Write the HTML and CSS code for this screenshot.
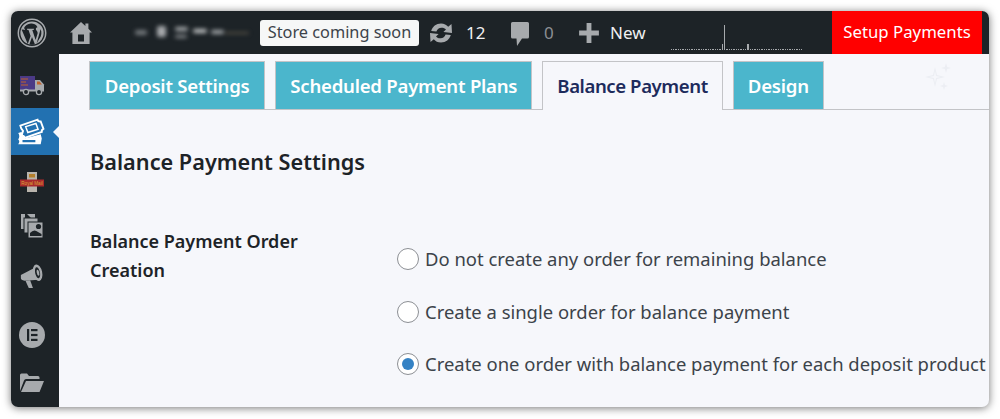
FILE: index.html
```html
<!DOCTYPE HTML>
<html>
<head>
  <meta charset="UTF-8">
  <title>Balance Payment Settings</title>
  <link rel="stylesheet" href="styles.css">
</head>
<body>
  <div class="window">
    <div class="topbar">
      <svg class="wp-logo" viewBox="0 0 30 30">
        <circle cx="15" cy="15" r="13.7" fill="none" stroke="#a7aaad" stroke-width="1.5"/>
        <circle cx="15" cy="15" r="11.6" fill="#a7aaad"/>
        <path d="M4.6 11.5 L10.8 26 L13.6 18 L11.5 12 L10 11.7 L10 10.7 L17 10.7 L17 11.7 L15.3 12 L18.6 22 L20.6 15.5 C21 13.6 19.4 12.6 19 11.7 C18.5 10.6 19.4 9.3 20.5 9.3 C19 6 16 5.5 14 5.6 C10.5 5.8 8 7.6 6.8 10.6 L8 10.7 L8 11.7 Z M23.6 11 C25 14 24.5 18 22.5 20.5 L19.6 25.5 Z M15 19 L18 26.4 C16 27 14 27 12.3 26.4 Z" fill="#1d2327"/>
      </svg>
      <svg class="home-icon" viewBox="0 0 22 24">
        <path d="M11 1 L15.4 5 L15.4 2.5 L18.4 2.5 L18.4 7.8 L22 11.4 L19.6 11.4 L19.6 23 L2.4 23 L2.4 11.4 L0 11.4 Z" fill="#a7aaad"/>
        <rect x="8" y="13.5" width="6" height="7" fill="#1d2327"/>
      </svg>
      <div class="blurred-name">
        <span class="blob b1"></span><span class="blob b2"></span><span class="blob b3"></span><span class="blob b4"></span><span class="blob b5"></span><span class="blob b6"></span><span class="blob b7"></span>
      </div>
      <div class="store-badge">Store coming soon</div>
      <svg class="updates-icon" viewBox="0 0 26 22">
        <path d="M13 1.5 C16.2 1.5 18.6 2.8 20.2 4.8 L23.5 2 L24 11 L15.4 10 L18 7.6 C16.8 6.2 15.2 5.6 13.4 5.7 C11 5.8 9.2 7.2 8.4 9.4 L3.2 9 C4.4 4.6 8.2 1.5 13 1.5 Z M13 20.5 C9.8 20.5 7.4 19.2 5.8 17.2 L2.5 20 L2 11 L10.6 12 L8 14.4 C9.2 15.8 10.8 16.4 12.6 16.3 C15 16.2 16.8 14.8 17.6 12.6 L22.8 13 C21.6 17.4 17.8 20.5 13 20.5 Z" fill="#a7aaad"/>
      </svg>
      <span class="bar-text count-updates">12</span>
      <svg class="comment-icon" viewBox="0 0 20 26">
        <path d="M2.5 1 L17.5 1 Q19 1 19 2.5 L19 16 Q19 17.5 17.5 17.5 L12 17.5 L7 25 L6.5 17.5 L2.5 17.5 Q1 17.5 1 16 L1 2.5 Q1 1 2.5 1 Z" fill="#a7aaad"/>
      </svg>
      <span class="bar-text count-comments">0</span>
      <svg class="plus-icon" viewBox="0 0 20 20">
        <path d="M7.8 1 L12.2 1 L12.2 7.8 L19 7.8 L19 12.2 L12.2 12.2 L12.2 19 L7.8 19 L7.8 12.2 L1 12.2 L1 7.8 L7.8 7.8 Z" fill="#a7aaad"/>
      </svg>
      <span class="bar-text count-new">New</span>
      <div class="sparkline" id="sparkline"></div>
      <div class="setup-btn">Setup Payments</div>
    </div>
    <div class="main">
      <div class="sidebar">
        <div class="menu-item">
          <svg class="menu-icon" viewBox="0 0 26 22">
            <rect x="1" y="2" width="15" height="14" fill="#4b3a86"/>
            <path d="M2 5 H9 M2 8 H7 M2 11 H9" stroke="#c2622c" stroke-width="1.2"/>
            <path d="M16 6 H21 L25 10.5 V16 H16 Z" fill="#a7aaad"/>
            <path d="M18 7.5 H20.5 L23 10.5 H18 Z" fill="#c2622c"/>
            <rect x="1" y="15.5" width="24" height="2" fill="#a7aaad"/>
            <circle cx="7" cy="18" r="2.6" fill="#1d2327" stroke="#a7aaad" stroke-width="1.3"/>
            <circle cx="20" cy="18" r="2.6" fill="#1d2327" stroke="#a7aaad" stroke-width="1.3"/>
          </svg>
        </div>
        <div class="menu-item active">
          <svg class="menu-icon" viewBox="0 0 28 26">
            <path d="M5 7 L21 1.5 Q21.5 3.6 24 3.2 L26.5 10 Q24.5 11 25 13 L9 18.5 Q8.5 16 6 16.5 L7.5 12 Q5.5 10 5 7 Z" fill="#2271b1" stroke="#fff" stroke-width="1.8"/>
            <path d="M10 8 L19.5 5 L21.5 10.5 L12 13.5 Z" fill="#2271b1" stroke="#fff" stroke-width="1.4"/>
            <path d="M3 14 L6 13 L9 19 L24 15 L25 19 L24 24.5 L3 24.5 Q5 21.5 3 20 Q5 17 3 14 Z" fill="#fff"/>
            <path d="M7 20.5 L19 20.5 L19 22.5 L7 22.5 Z" fill="#2271b1"/>
          </svg>
        </div>
        <div class="menu-item mail-item">
          <svg class="menu-icon" viewBox="0 0 26 22">
            <rect x="8" y="1" width="10" height="20" fill="#b9b4ac"/>
            <rect x="10" y="3" width="6" height="3.5" fill="#b5802c"/>
            <rect x="1" y="8.5" width="24" height="7" fill="#a92a2c"/>
            <text class="mail-text" x="13" y="14" text-anchor="middle">Royal Mail</text>
          </svg>
        </div>
        <div class="menu-item">
          <svg class="menu-icon" viewBox="0 0 24 26">
            <rect x="1" y="1" width="14" height="15" fill="#a7aaad"/>
            <path d="M5 1 L7 1 L11 5 L5 5 Z" fill="#1d2327"/>
            <rect x="4" y="5" width="14" height="15" fill="#a7aaad" stroke="#1d2327"/>
            <rect x="8" y="9" width="15" height="16" fill="#a7aaad" stroke="#1d2327"/>
            <path d="M10 23 L10 20 Q14 15.5 18 19 L21.5 21 V23 Z" fill="#1d2327"/>
            <circle cx="18.5" cy="13.5" r="2.6" fill="#1d2327"/>
          </svg>
        </div>
        <div class="menu-item megaphone-item">
          <svg class="menu-icon" viewBox="0 0 26 28">
            <path d="M1 13 L16 5 L20 18 L5 19 Q1 19 1 16 Z" fill="#a7aaad"/>
            <ellipse cx="19" cy="10.5" rx="5" ry="9" fill="#a7aaad" transform="rotate(-12 19 10.5)"/>
            <ellipse cx="19" cy="10.5" rx="2.6" ry="6" fill="#1d2327" transform="rotate(-12 19 10.5)"/>
            <ellipse cx="19.5" cy="10.5" rx="1.3" ry="3.4" fill="#a7aaad" transform="rotate(-12 19.5 10.5)"/>
            <path d="M6 19 L11 18.5 L14 27 L9.5 27 Z" fill="#a7aaad"/>
          </svg>
        </div>
        <div class="menu-item elementor-item">
          <svg class="menu-icon" viewBox="0 0 26 26">
            <circle cx="13" cy="13" r="13" fill="#a7aaad"/>
            <rect x="8" y="7" width="2.2" height="12" fill="#1d2327"/>
            <rect x="12" y="7" width="6.5" height="2.2" fill="#1d2327"/>
            <rect x="12" y="11.9" width="6.5" height="2.2" fill="#1d2327"/>
            <rect x="12" y="16.8" width="6.5" height="2.2" fill="#1d2327"/>
          </svg>
        </div>
        <div class="menu-item folder-item">
          <svg class="menu-icon" viewBox="0 0 26 22">
            <path d="M1 19 V3 Q1 1.5 2.5 1.5 H8 L10 4 H19 Q20.5 4 20.5 5.5 V7 H7 Q5.5 7 5 8.5 Z" fill="#a7aaad"/>
            <path d="M7 9 H25 L20.5 20 H2 Z" fill="#a7aaad"/>
          </svg>
        </div>
      </div>
      <div class="content">
        <div class="tabs">
          <div class="tab">Deposit Settings</div>
          <div class="tab">Scheduled Payment Plans</div>
          <div class="tab selected">Balance Payment</div>
          <div class="tab">Design</div>
          <svg class="sparkle" viewBox="0 0 30 30">
            <path d="M12 5 L14 13 L22 15 L14 17 L12 25 L10 17 L2 15 L10 13 Z M12 9 L13 14 L18 15 L13 16 L12 21 L11 16 L6 15 L11 14 Z" fill="#eceef3" fill-rule="evenodd"/>
            <path d="M23 1 L24.2 5 L28 6 L24.2 7 L23 11 L21.8 7 L18 6 L21.8 5 Z M21 20 L22 23 L25 24 L22 25 L21 28 L20 25 L17 24 L20 23 Z" fill="#eceef3"/>
          </svg>
        </div>
        <h2 class="section-title">Balance Payment Settings</h2>
        <div class="setting-row">
          <div class="setting-label">Balance Payment Order Creation</div>
          <div class="options">
            <label class="option"><span class="radio"></span>Do not create any order for remaining balance</label>
            <label class="option"><span class="radio"></span>Create a single order for balance payment</label>
            <label class="option"><span class="radio checked"></span>Create one order with balance payment for each deposit product</label>
          </div>
        </div>
      </div>
    </div>
  </div>
  <script>
    // sparkline values, the spike sits a bit left of the middle
    var values = [];
    for (var i = 0; i < 57; i++) values.push(1.5);
    values[22] = 6;
    values[23] = 25;
    values[33] = 6;
    var box = document.getElementById("sparkline");
    values.forEach(function(v) {
      var bar = document.createElement("i");
      bar.style.height = v + "px";
      box.appendChild(bar);
    });
  </script>
</body>
</html>
```

FILE: styles.css
```css
html, body { margin: 0; padding: 0; height: 419px; overflow: hidden; background: #fff; }
body { font-family: "Noto Sans", "Open Sans", Arial, sans-serif; }

.window {
  width: 978px;
  height: 396px;
  margin: 11px;
  border-radius: 7px;
  overflow: hidden;
  background: #f6f7fb;
  box-shadow: 0 1px 9px rgba(0, 0, 0, 0.55);
  display: flex;
  flex-direction: column;
}

/* top admin bar */
.topbar {
  height: 43px;
  flex: none;
  background: #1d2327;
  display: flex;
  align-items: center;
  color: #f0f0f1;
  padding-right: 7px;
}
.wp-logo { width: 30px; height: 30px; margin-left: 6px; flex: none; }
.home-icon { width: 22px; height: 24px; margin-left: 23px; flex: none; }
.blurred-name {
  width: 156px;
  height: 20px;
  margin-left: 12px;
  flex: none;
  position: relative;
  filter: blur(2px);
}
.blob { position: absolute; background: #a7aaad; border-radius: 2px; }
.b1 { left: 31px; top: 7px; width: 12px; height: 5px; background: #74787c; }
.b2 { left: 53px; top: 3px; width: 9px; height: 11px; }
.b3 { left: 71px; top: 4px; width: 13px; height: 4px; }
.b4 { left: 71px; top: 12px; width: 12px; height: 3px; background: #8a8d90; }
.b5 { left: 89px; top: 6px; width: 14px; height: 4px; background: #c4c6c8; }
.b6 { left: 107px; top: 7px; width: 13px; height: 4px; background: #a4a7aa; }
.b7 { left: 121px; top: 9px; width: 24px; height: 2px; background: #5a5448; }
.store-badge {
  width: 159px;
  height: 26px;
  line-height: 25px;
  background: #f6f7f7;
  border-radius: 3px;
  color: #3c434a;
  font-size: 16.3px;
  text-align: center;
  flex: none;
}
.updates-icon { width: 26px; height: 22px; margin-left: 9px; flex: none; }
.bar-text { font-size: 17px; line-height: 22px; flex: none; }
.count-updates { margin-left: 12px; width: 18px; }
.comment-icon { width: 20px; height: 26px; margin-left: 26px; margin-top: 2px; flex: none; }
.count-comments { color: #8c8f94; margin-left: 14px; width: 10px; }
.plus-icon { width: 22px; height: 22px; margin-left: 24px; flex: none; }
.count-new { margin-left: 10px; }
.sparkline {
  display: flex;
  align-items: flex-end;
  gap: 1px;
  height: 26px;
  margin-left: 25px;
  margin-top: 9px;
  width: 134px;
  flex: none;
}
.sparkline i { display: block; width: 1.34px; background: #a7aaad; }
.setup-btn {
  margin-left: auto;
  width: 150px;
  height: 43px;
  line-height: 42px;
  background: #f00;
  color: #fff;
  font-size: 16.8px;
  text-align: center;
}

.main { flex: 1; display: flex; min-height: 0; }

/* left menu */
.sidebar { width: 48px; flex: none; background: #1d2327; display: flex; flex-direction: column; padding-top: 7px; }
.menu-item { height: 47px; display: flex; align-items: center; justify-content: center; padding-right: 6px; box-sizing: border-box; position: relative; flex: none; }
.menu-item.active { background: #2271b1; padding-right: 10px; }
.menu-item.active::after {
  content: "";
  position: absolute;
  right: 0;
  top: 18px;
  border: 6px solid transparent;
  border-right-color: #f6f7fb;
  border-left-width: 0;
}
.mail-item .menu-icon, .megaphone-item .menu-icon { margin-top: 7px; }
.elementor-item { margin-top: 15px; }
.folder-item { margin-top: 1px; }
.menu-icon { width: 26px; height: 26px; }
.active .menu-icon { width: 30px; height: 30px; }
.mail-text { font-family: "Liberation Sans", Arial, sans-serif; font-size: 4.6px; fill: #d8a53a; }

/* content */
.content { flex: 1; padding: 7px 0 0 30px; min-width: 0; }
.tabs { display: flex; gap: 10px; border-bottom: 1px solid #c3c4c7; height: 48px; position: relative; }
.tab {
  height: 48px;
  box-sizing: border-box;
  padding: 0 14px;
  line-height: 47px;
  background: #4bb6cc;
  border: 1px solid #c3c4c7;
  border-bottom: none;
  color: #fff;
  font-size: 18.6px;
  letter-spacing: -0.24px;
  font-weight: 600;
  white-space: nowrap;
}
.tab:first-child { padding: 0 14.8px; }
.tab.selected { background: #f6f7fb; color: #1d2b5c; height: 49px; letter-spacing: -0.42px; }
.sparkle { position: absolute; left: 834px; top: 1px; width: 30px; height: 30px; }

.section-title { margin: 37px 0 0; padding-left: 1px; font-size: 21.7px; line-height: 30px; font-weight: 600; color: #1d2327; }
.setting-row { display: flex; margin-top: 50px; padding-left: 1px; }
.setting-label { width: 307px; flex: none; padding-right: 60px; box-sizing: border-box; font-size: 18px; line-height: 29px; font-weight: 600; color: #1d2327; }
.options { display: flex; flex-direction: column; gap: 24.5px; padding-top: 18px; }
.option { display: flex; align-items: center; font-size: 18.45px; line-height: 28px; color: #3c434a; white-space: nowrap; }
.radio {
  width: 22px;
  height: 22px;
  box-sizing: border-box;
  border: 1px solid #8c8f94;
  border-radius: 50%;
  background: #fff;
  margin: 0 6px 0 0;
  flex: none;
  display: flex;
  align-items: center;
  justify-content: center;
}
.radio.checked::before { content: ""; width: 12px; height: 12px; border-radius: 50%; background: #3582c4; }
```
